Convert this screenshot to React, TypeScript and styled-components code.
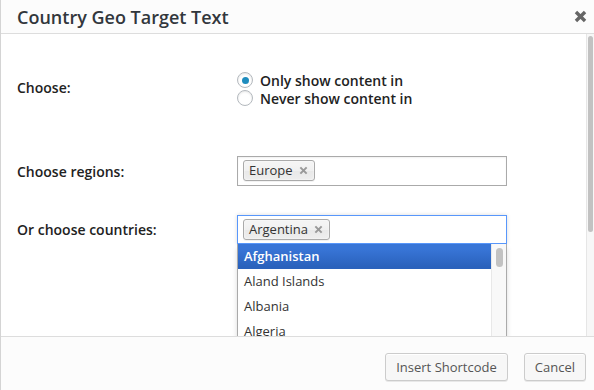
import React, { useState } from "react";
import styled, { createGlobalStyle } from "styled-components";

const GlobalStyle = createGlobalStyle`
  html, body {
    margin: 0;
    padding: 0;
    background: #ffffff;
  }
  body {
    font-family: "Open Sans", "Noto Sans", sans-serif;
    color: #222;
  }
  * {
    box-sizing: border-box;
  }
`;

const Modal = styled.div`
  width: 594px;
  height: 390px;
  display: flex;
  flex-direction: column;
  border-left: 1px solid #d4d4d4;
  background: #fff;
  overflow: hidden;
`;

const Header = styled.header`
  height: 34px;
  flex: none;
  display: flex;
  align-items: center;
  justify-content: space-between;
  padding: 0 5px 0 16px;
  background: #fcfcfc;
  border-bottom: 1px solid #dddddd;
`;

const Title = styled.h1`
  margin: 0;
  font-size: 18px;
  font-weight: 600;
  color: #32373c;
  line-height: 1;
`;

const CloseButton = styled.button`
  width: 18px;
  height: 18px;
  border: 0;
  padding: 0;
  background: transparent;
  display: flex;
  align-items: center;
  justify-content: center;
  cursor: pointer;
  color: #666;
`;

const Main = styled.div`
  flex: 1;
  display: flex;
  min-height: 0;
  overflow: hidden;
`;

const Content = styled.div`
  flex: 1;
  padding: 0 16px;
`;

const Scrollbar = styled.div`
  width: 8px;
  flex: none;
  background: #f7f7f7;
  border-left: 1px solid #e6e6e6;
  padding: 2px 1px 0 1px;
`;

const Thumb = styled.div<{ $height: number }>`
  height: ${({ $height }) => $height}px;
  border-radius: 3px;
  background: #c2c2c2;
`;

const Row = styled.div<{ $top: number; $align?: string }>`
  display: grid;
  grid-template-columns: 220px 270px;
  align-items: ${({ $align }) => $align ?? "center"};
  margin-top: ${({ $top }) => $top}px;
`;

const Label = styled.label<{ $offset?: number }>`
  font-size: 14px;
  font-weight: 600;
  color: #222;
  line-height: 19px;
  padding-top: ${({ $offset }) => ($offset && $offset > 0 ? $offset : 0)}px;
  padding-bottom: ${({ $offset }) => ($offset && $offset < 0 ? -$offset : 0)}px;
`;

const RadioGroup = styled.div`
  display: flex;
  flex-direction: column;
`;

const RadioLine = styled.label`
  display: flex;
  align-items: center;
  gap: 7px;
  height: 18px;
  font-size: 14px;
  font-weight: 600;
  color: #222;
`;

const RadioCircle = styled.span<{ $checked: boolean }>`
  width: 16px;
  height: 16px;
  border-radius: 50%;
  border: 1px solid #b4b9be;
  background: #fff;
  box-shadow: inset 0 1px 2px rgba(0, 0, 0, 0.1);
  display: flex;
  align-items: center;
  justify-content: center;

  &::after {
    content: "";
    width: 7px;
    height: 7px;
    border-radius: 50%;
    background: #1e8cbe;
    display: ${({ $checked }) => ($checked ? "block" : "none")};
  }
`;

const SelectWrap = styled.div`
  position: relative;
`;

const SelectBox = styled.div<{ $active?: boolean; $height: number }>`
  height: ${({ $height }) => $height}px;
  border: 1px solid ${({ $active }) => ($active ? "#5897fb" : "#aaaaaa")};
  background: #fff;
  padding: 3px 5px;
  display: flex;
  align-items: flex-start;
  box-shadow: ${({ $active }) =>
    $active ? "0 0 4px rgba(0, 0, 0, 0.15)" : "inset 0 1px 2px rgba(0,0,0,0.06)"};
`;

const Tag = styled.span`
  height: 21px;
  display: inline-flex;
  align-items: center;
  gap: 6px;
  padding: 0 6px 0 5px;
  border: 1px solid #aaa;
  border-radius: 3px;
  background: linear-gradient(#f4f4f4 20%, #f0f0f0 50%, #e8e8e8 52%, #eeeeee 100%);
  box-shadow: inset 0 0 2px #fff, 0 1px 0 rgba(0, 0, 0, 0.05);
  font-size: 13px;
  color: #333;
  line-height: 1;
`;

const TagRemove = styled.span`
  display: flex;
  align-items: center;
  color: #999;
`;

const Drop = styled.div`
  position: absolute;
  left: 0;
  right: 0;
  top: 100%;
  height: 240px;
  display: flex;
  background: #fff;
  border: 1px solid #aaa;
  border-top: 0;
  box-shadow: 0 4px 5px rgba(0, 0, 0, 0.15);
  z-index: 5;
`;

const Results = styled.ul`
  flex: 1;
  list-style: none;
  margin: 0;
  padding: 0;
`;

const Option = styled.li<{ $highlighted?: boolean }>`
  padding: 5px 6px;
  line-height: 15px;
  font-size: 13px;
  color: ${({ $highlighted }) => ($highlighted ? "#fff" : "#333")};
  font-weight: ${({ $highlighted }) => ($highlighted ? 600 : 400)};
  background: ${({ $highlighted }) =>
    $highlighted ? "linear-gradient(#3875d7 20%, #2a62bc 90%)" : "transparent"};
`;

const DropScroll = styled.div`
  width: 15px;
  flex: none;
  background: #f8f8f8;
  border-left: 1px solid #e8e8e8;
  padding: 4px 3px 0 4px;
`;

const DropThumb = styled.div`
  height: 19px;
  border-radius: 4px;
  background: #c2c2c2;
`;

const Footer = styled.footer`
  height: 54px;
  flex: none;
  display: flex;
  justify-content: flex-end;
  align-items: flex-start;
  gap: 16px;
  padding: 16px 8px 0 0;
  background: #fcfcfc;
  border-top: 1px solid #dddddd;
`;

const Button = styled.button`
  height: 28px;
  padding: 0 10px;
  border: 1px solid #cccccc;
  border-radius: 3px;
  background: #f7f7f7;
  box-shadow: inset 0 1px 0 #fff, 0 1px 0 rgba(0, 0, 0, 0.08);
  font-family: "Open Sans", "Noto Sans", sans-serif;
  font-size: 13px;
  color: #555;
  cursor: pointer;
`;

const XIcon = ({ size, stroke }: { size: number; stroke: number }) => (
  <svg width={size} height={size} viewBox="0 0 10 10">
    <path d="M1.5 1.5 L8.5 8.5 M8.5 1.5 L1.5 8.5" stroke="currentColor" strokeWidth={stroke} strokeLinecap="butt" />
  </svg>
);

const countries = ["Afghanistan", "Aland Islands", "Albania", "Algeria"];

export default function App() {
  const [mode, setMode] = useState("only");

  return (
    <>
      <GlobalStyle />
      <Modal>
        <Header>
          <Title>Country Geo Target Text</Title>
          <CloseButton aria-label="Close">
            <XIcon size={13} stroke={2.6} />
          </CloseButton>
        </Header>
        <Main>
          <Content>
            <Row $top={37}>
              <Label $offset={-3}>Choose:</Label>
              <RadioGroup>
                <RadioLine onClick={() => setMode("only")}>
                  <RadioCircle $checked={mode === "only"} />
                  Only show content in
                </RadioLine>
                <RadioLine onClick={() => setMode("never")}>
                  <RadioCircle $checked={mode === "never"} />
                  Never show content in
                </RadioLine>
              </RadioGroup>
            </Row>
            <Row $top={49}>
              <Label>Choose regions:</Label>
              <SelectWrap>
                <SelectBox $height={30}>
                  <Tag>
                    Europe
                    <TagRemove>
                      <XIcon size={9} stroke={2.2} />
                    </TagRemove>
                  </Tag>
                </SelectBox>
              </SelectWrap>
            </Row>
            <Row $top={29} $align="start">
              <Label $offset={5}>Or choose countries:</Label>
              <SelectWrap>
                <SelectBox $active $height={29}>
                  <Tag>
                    Argentina
                    <TagRemove>
                      <XIcon size={9} stroke={2.2} />
                    </TagRemove>
                  </Tag>
                </SelectBox>
                <Drop>
                  <Results>
                    {countries.map((c, i) => (
                      <Option key={c} $highlighted={i === 0}>
                        {c}
                      </Option>
                    ))}
                  </Results>
                  <DropScroll>
                    <DropThumb />
                  </DropScroll>
                </Drop>
              </SelectWrap>
            </Row>
          </Content>
          <Scrollbar>
            <Thumb $height={196} />
          </Scrollbar>
        </Main>
        <Footer>
          <Button>Insert Shortcode</Button>
          <Button>Cancel</Button>
        </Footer>
      </Modal>
    </>
  );
}
